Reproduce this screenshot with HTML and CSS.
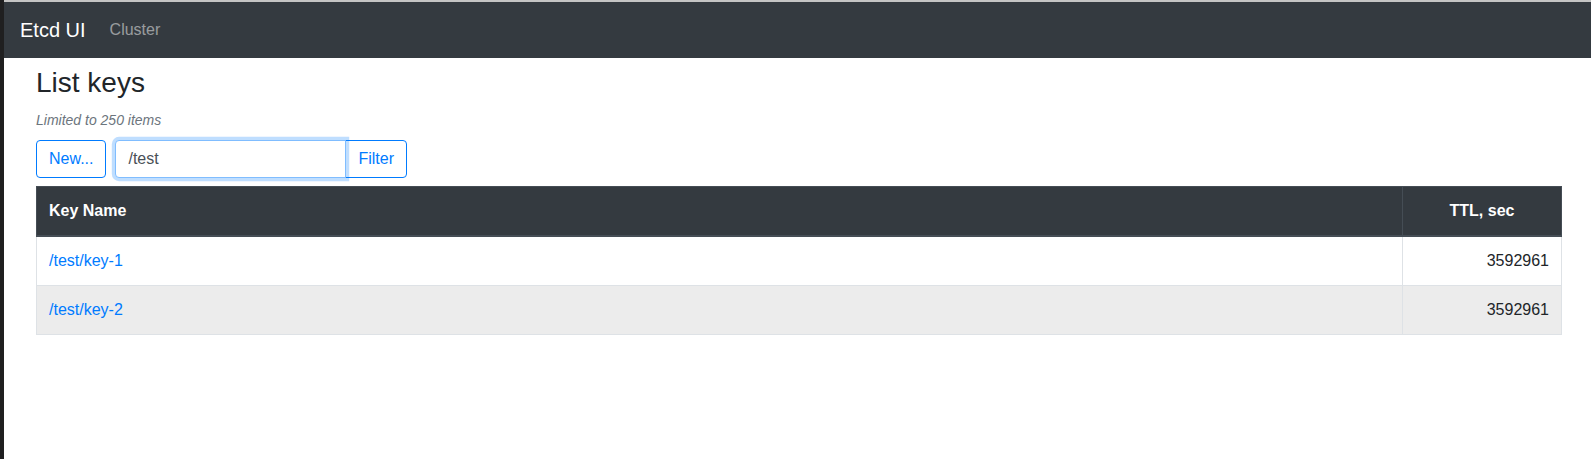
FILE: index.html
```html
<!DOCTYPE html>
<html lang="en">
<head>
<meta charset="utf-8">
<title>Etcd UI</title>
<link rel="stylesheet" href="styles.css">
</head>
<body>
<div class="window">
  <div class="strip"></div>
  <div class="app">
    <div class="topline"></div>
    <nav class="navbar">
      <a class="brand" href="#">Etcd UI</a>
      <a class="nav-link" href="#">Cluster</a>
    </nav>
    <main class="content">
      <h3 class="title">List keys</h3>
      <div class="note"><small>Limited to 250 items</small></div>
      <form class="toolbar">
        <button type="button" class="btn">New...</button>
        <div class="input-group">
          <input class="field" type="text" value="/test">
          <button type="button" class="btn btn-append">Filter</button>
        </div>
      </form>
      <table class="keys">
        <thead>
          <tr>
            <th class="name">Key Name</th>
            <th class="ttl">TTL, sec</th>
          </tr>
        </thead>
        <tbody>
          <tr>
            <td><a href="#">/test/key-1</a></td>
            <td class="num">3592961</td>
          </tr>
          <tr class="hover">
            <td><a href="#">/test/key-2</a></td>
            <td class="num">3592961</td>
          </tr>
        </tbody>
      </table>
    </main>
  </div>
</div>
</body>
</html>
```

FILE: styles.css
```css
* { box-sizing: border-box; }

html, body {
  margin: 0;
  padding: 0;
  height: 100%;
  background: #fff;
}

body {
  font-family: "Liberation Sans", Arial, sans-serif;
  font-size: 16px;
  line-height: 1.5;
  color: #212529;
}

.window {
  display: flex;
  min-height: 100%;
}

.strip {
  width: 4px;
  flex: 0 0 4px;
  background: #1f1f20;
}

.app {
  flex: 1;
  min-width: 0;
}

.topline {
  height: 2px;
  background: #c4c4c4;
}

.navbar {
  display: flex;
  align-items: center;
  height: 56px;
  padding: 8px 16px;
  background: #343a40;
}

.brand {
  font-size: 20px;
  line-height: 30px;
  padding: 5px 0;
  margin-right: 16px;
  color: #fff;
  text-decoration: none;
}

.nav-link {
  padding: 8px;
  color: rgba(255, 255, 255, 0.5);
  text-decoration: none;
}

.content {
  padding: 0 29px 0 32px;
}

.title {
  margin: 8px 0 8px;
  font-size: 28px;
  font-weight: 500;
  line-height: 1.2;
}

.note {
  margin-bottom: 8px;
}

.note small {
  font-size: 14px;
  font-style: italic;
  color: #6c757d;
}

.toolbar {
  display: flex;
  align-items: center;
  margin: 0 0 8px;
}

.btn {
  font-family: inherit;
  font-size: 16px;
  line-height: 1.5;
  height: 38px;
  padding: 6px 12px;
  color: #007bff;
  background: #fff;
  border: 1px solid #007bff;
  border-radius: 4px;
  cursor: pointer;
}

.toolbar > .btn {
  margin-right: 9px;
}

.input-group {
  display: flex;
}

.field {
  position: relative;
  z-index: 2;
  width: 231px;
  height: 38px;
  padding: 6px 12px;
  font-family: inherit;
  font-size: 16px;
  line-height: 1.5;
  color: #495057;
  background: #fff;
  border: 1px solid #80bdff;
  border-radius: 4px 0 0 4px;
  box-shadow: 0 0 0 3.2px rgba(0, 123, 255, 0.25);
  outline: none;
}

.btn-append {
  margin-left: -1px;
  border-radius: 0 4px 4px 0;
}

.keys {
  width: 100%;
  border-collapse: collapse;
  color: #212529;
}

.keys th,
.keys td {
  padding: 12px;
  border: 1px solid #dee2e6;
  vertical-align: top;
}

.keys thead th {
  background: #343a40;
  color: #fff;
  border-color: #454d55;
  border-bottom-width: 2px;
  font-weight: bold;
  text-align: left;
}

.keys thead th.ttl {
  width: 159px;
  text-align: center;
}

.keys td.num {
  text-align: right;
}

.keys tr.hover td {
  background: #ececec;
}

.keys a {
  color: #007bff;
  text-decoration: none;
}
```
